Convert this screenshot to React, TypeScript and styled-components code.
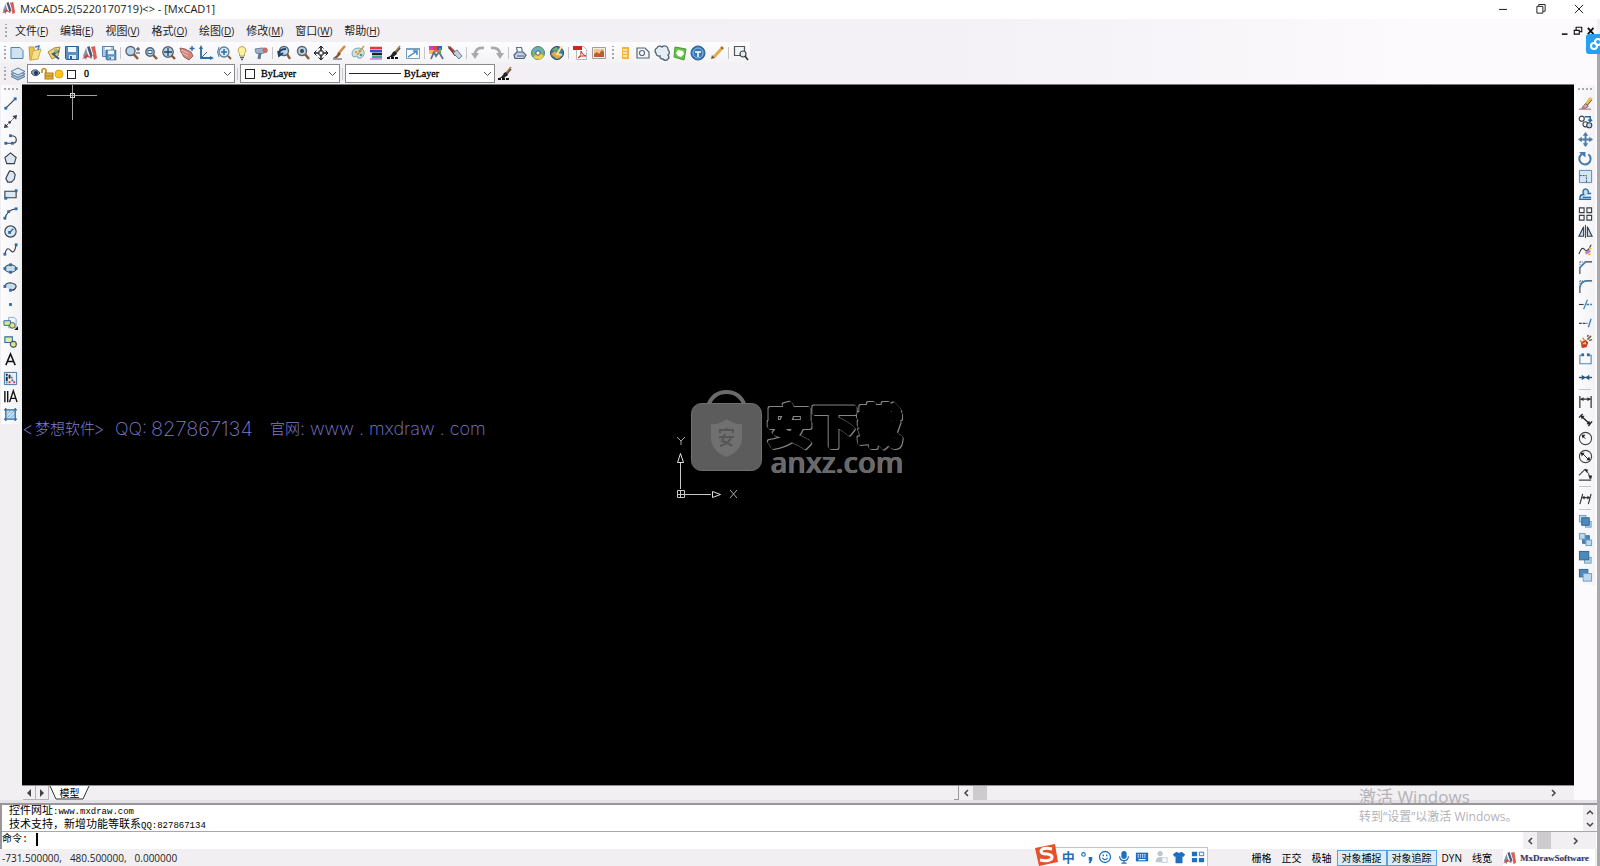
import React, { useState } from "react";
import styled, { createGlobalStyle } from "styled-components";

const UI = '"Open Sans", "Noto Sans CJK SC", sans-serif';
const SONG = '"Liberation Serif", "Noto Sans CJK SC", serif';
const MONO = '"Liberation Mono", "Noto Sans CJK SC", monospace';

const Global = createGlobalStyle`
  *, *::before, *::after { box-sizing: border-box; }
  body { margin: 0; background: #f1eff2; color: #222; font: 11px/16px ${UI}; }
  button { border: 0; padding: 0; margin: 0; background: none; color: inherit; font: inherit; }
  select, input { font: inherit; color: inherit; }
`;

const Window = styled.div`
  display: flex;
  flex-direction: column;
  min-height: 100vh;
  position: relative;
  overflow: hidden;
`;
const TitleBar = styled.header`
  display: flex;
  align-items: flex-start;
  height: 19px;
  padding: 1px 2px 0;
  background: #fff;
`;
const Title = styled.h1`
  flex: 1;
  margin: 0;
  padding-left: 4px;
  font-size: 11px;
  font-weight: 400;
  line-height: 16px;
`;
const WindowControl = styled.button`
  width: 38px;
  height: 15px;
  display: grid;
  place-items: center;
`;
const Body = styled.div`
  flex: 1;
  display: flex;
`;
const Frame = styled.main`
  flex: 1;
  min-width: 0;
  display: flex;
  flex-direction: column;
`;
const Edge = styled.div`
  width: 3px;
  margin-top: 32px;
  background: #a9a8aa;
`;
const Bars = styled.div`
  background: linear-gradient(90deg, #f1eff2 0%, #f3f1f5 60%, #fcfafd 90%);
`;
const MenuBar = styled.nav`
  display: flex;
  align-items: center;
  height: 23px;
  padding-left: 1px;
`;
const MenuItem = styled.button`
  padding: 0 6px;
  font-size: 11px;
  line-height: 20px;
  white-space: nowrap;
`;
const MenuKey = styled.span`
  font-size: 10px;
`;
const MdiControls = styled.div`
  display: flex;
  margin-left: auto;
`;
const MdiButton = styled.button`
  width: 13px;
  height: 18px;
  display: grid;
  place-items: center;
`;
const Toolbar = styled.div`
  display: flex;
  align-items: center;
  height: 21px;
`;
const ToolbarFace = styled.div<{ $vertical?: boolean }>`
  display: flex;
  align-items: center;
  flex-direction: ${(p) => (p.$vertical ? "column" : "row")};
  background: linear-gradient(${(p) => (p.$vertical ? "90deg" : "180deg")}, #fdfcfe, #f3f2f4);
  ${(p) => (p.$vertical ? "" : "height: 21px;")}
`;
const Grip = styled.span<{ $vertical?: boolean }>`
  flex: none;
  width: ${(p) => (p.$vertical ? 14 : 8)}px;
  height: ${(p) => (p.$vertical ? 9 : 13)}px;
  background: radial-gradient(circle, #aaa8ac 1px, transparent 1px) 3px 2px / 4px 4px
    ${(p) => (p.$vertical ? "repeat-x" : "repeat-y")};
`;
const Group = styled.div<{ $size: number; $vertical?: boolean }>`
  display: flex;
  flex-direction: ${(p) => (p.$vertical ? "column" : "row")};
  ${(p) => (p.$vertical ? "height" : "width")}: ${(p) => p.$size}px;
`;
const ToolButton = styled.button`
  flex: 1;
  min-width: 16px;
  min-height: 16px;
  display: grid;
  place-items: center;
`;
const Separator = styled.span<{ $vertical?: boolean }>`
  flex: none;
  width: ${(p) => (p.$vertical ? 12 : 1)}px;
  height: ${(p) => (p.$vertical ? 1 : 12)}px;
  margin: ${(p) => (p.$vertical ? "2px 0" : "0 2px")};
  background: #c6c4c8;
`;
const Combo = styled.label<{ $width: number }>`
  display: flex;
  align-items: center;
  width: ${(p) => p.$width}px;
  height: 19px;
  padding: 0 2px 0 3px;
  border: 1px solid #8a888c;
  background: #fff;
`;
const ComboSelect = styled.select<{ $indent: number }>`
  flex: 1;
  min-width: 0;
  height: 17px;
  border: 0;
  padding: 0 0 0 ${(p) => p.$indent}px;
  appearance: none;
  background: transparent;
  color: #000;
  font: 400 10px/16px ${SONG};
  -webkit-text-stroke: 0.3px #000;
`;
const Swatch = styled.span`
  width: 10px;
  height: 10px;
  margin: 0 1px;
  border: 1px solid #222;
  background: #fff;
`;
const LineSample = styled.span`
  width: 52px;
  height: 1px;
  background: #222;
`;
const Workspace = styled.div`
  flex: 1;
  display: flex;
`;
const SidePanel = styled.aside<{ $width: number; $right?: boolean }>`
  width: ${(p) => p.$width}px;
  padding-top: 1px;
  background: ${(p) => (p.$right ? "#fcfafd" : "#f1eff2")};
  ${ToolbarFace} { margin: 0 2px 0 1px; }
`;
const Drawing = styled.section`
  flex: 1;
  min-width: 0;
  display: flex;
  flex-direction: column;
  border-top: 1px solid #777;
`;
const Canvas = styled.div`
  position: relative;
  flex: 1;
  min-height: 480px;
  overflow: hidden;
  background: #000;
`;
const Crosshair = styled.svg`
  position: absolute;
  left: 25px;
  top: 0;
`;
const Banner = styled.p`
  position: absolute;
  left: 0;
  top: 332px;
  display: flex;
  margin: 0;
  color: #7d7dd0;
  font: 200 18px/24px Inter, "Noto Sans CJK SC", sans-serif;
  white-space: pre;
`;
const BannerPart = styled.span<{ $width: number; $size?: number }>`
  width: ${(p) => p.$width}px;
  font-size: ${(p) => p.$size ?? 18}px;
`;
const Ucs = styled.svg`
  position: absolute;
  left: calc(50% - 125px);
  top: 50%;
`;
const Brand = styled.div`
  position: absolute;
  left: calc(50% - 107px);
  top: calc(50% - 45px);
  display: flex;
  gap: 5px;
`;
const BrandText = styled.div`
  display: flex;
  flex-direction: column;
  padding-top: 12px;
`;
const BrandName = styled.svg`
  display: block;
  overflow: visible;
  filter: drop-shadow(1px 1px 0 #858585) drop-shadow(-1px -1px 0 #858585);
  text {
    fill: #000;
    stroke: #000;
    stroke-width: 4px;
    stroke-linejoin: round;
    font: 700 45px "Noto Sans CJK SC", sans-serif;
  }
`;
const BrandSite = styled.span`
  padding-left: 3px;
  color: #686868;
  font: 600 29px/24px "Open Sans", sans-serif;
  text-shadow: 1px 0 #7c7c7c;
`;
const TabStrip = styled.div`
  display: flex;
  align-items: stretch;
  height: 15px;
  padding-left: 1px;
  border-top: 1px solid #8f8d91;
  background: #f1eff2;
`;
const TabNav = styled.button`
  width: 13px;
  display: grid;
  place-items: center;
  border: solid #b5b3b7;
  border-width: 0 1px 1px 0;
`;
const ModelTab = styled.button`
  position: relative;
  width: 41px;
  display: grid;
  place-items: center;
  color: #000;
  font-size: 10px;
  line-height: 13px;
  svg { position: absolute; inset: 0; }
  span { position: relative; }
`;
const SplitBox = styled.span`
  width: 5px;
  margin-left: auto;
  border: solid #9a989c;
  border-width: 0 1px 1px 0;
`;
const HScroll = styled.div<{ $width: string }>`
  display: flex;
  align-items: stretch;
  width: ${(p) => p.$width};
  background: #f1eff2;
`;
const ScrollArrow = styled.button`
  flex: none;
  width: 14px;
  display: grid;
  place-items: center;
`;
const Thumb = styled.span`
  width: 14px;
  margin-right: auto;
  background: #cdcbce;
`;
const Splitter = styled.div`
  height: 5px;
  border-bottom: 2px solid #98969a;
  background: #e4e2e6;
`;
const CommandPane = styled.section`
  border-left: 2px solid #98969a;
  background: #fff;
  color: #000;
  font: 11px/14px ${MONO};
`;
const HistoryRow = styled.div`
  display: flex;
  height: 27px;
  border-bottom: 1px solid #a9a7ab;
`;
const History = styled.div`
  flex: 1;
  padding-left: 7px;
  overflow: hidden;
  p { margin: 0; line-height: 13px; }
`;
const Ascii = styled.span`
  font-size: 9px;
`;
const VScroll = styled.div`
  display: flex;
  flex-direction: column;
  width: 13px;
  margin-right: 1px;
  background: #f1eff2;
`;
const VArrow = styled.button`
  flex: 1;
  display: grid;
  place-items: center;
`;
const CommandRow = styled.div`
  display: flex;
  align-items: stretch;
  height: 17px;
  padding-right: 1px;
`;
const CommandLabel = styled.label`
  display: flex;
  flex: 1;
  font-size: 10px;
  line-height: 15px;
`;
const CommandInput = styled.input`
  flex: 1;
  height: 13px;
  margin: 1px 0 0 8px;
  padding: 0;
  border: 0;
  border-left: 2px solid #000;
  outline: 0;
  background: transparent;
`;
const Corner = styled.span`
  width: 13px;
  background: #f1eff2;
`;
const StatusBar = styled.footer`
  display: flex;
  align-items: stretch;
  height: 17px;
  padding: 0 2px;
  font-size: 10px;
  line-height: 18px;
`;
const Coordinates = styled.output`
  flex: 1;
  display: flex;
  gap: 8px;
`;
const ModeButton = styled.button<{ $on?: boolean }>`
  height: 16px;
  margin-top: 1px;
  padding: 0 4px;
  border: 1px solid ${(p) => (p.$on ? "#5aa2dc" : "transparent")};
  background: ${(p) => (p.$on ? "#dcebf8" : "transparent")};
  color: #000;
  line-height: 15px;
`;
const Vendor = styled.span`
  display: flex;
  align-items: center;
  gap: 3px;
  width: 92px;
  margin-left: 6px;
  background: #fff;
  color: #33334f;
  font: 700 9px/16px ${SONG};
  text-shadow: 1px 0 #8a8aff66;
`;
const Ime = styled.div`
  position: absolute;
  left: 65%;
  bottom: 0;
  display: flex;
  align-items: center;
  height: 19px;
  width: 168px;
  border: solid #c5c3c8;
  border-width: 1px 1px 0 0;
  background: #fff;
  svg { flex: none; }
`;
const ImeLogo = styled.button`
  width: 25px;
  height: 22px;
  margin: -4px 0 0 -6px;
`;
const ImeButton = styled.button`
  flex: 1;
  height: 18px;
  display: grid;
  place-items: center;
  color: #1f6fc0;
  font: 700 13px/16px "Noto Sans CJK SC", sans-serif;
`;
const Activation = styled.div`
  position: absolute;
  right: 76px;
  bottom: 40px;
  width: 165px;
  color: #b4b2b6;
  pointer-events: none;
  white-space: nowrap;
  p { margin: 0; font-size: 12px; line-height: 18px; }
  p:first-child { font-size: 17px; line-height: 22px; }
`;
const CloudTab = styled.button`
  position: absolute;
  right: 0;
  top: 34px;
  width: 14px;
  height: 20px;
  border-radius: 3px 0 0 3px;
  background: #26a0f2;
  overflow: hidden;
`;

const B = "#2b6ca6";
const D = "#3a3f48";
const L = "#c3dcee";
const Y = "#f2c14a";

const Glyph = ({ children, size = 16 }: { children: React.ReactNode; size?: number }) => (
  <svg width={size} height={size} viewBox="0 0 16 16" fill="none" aria-hidden="true">
    {children}
  </svg>
);

const Lens = ({ x = 6.5, y = 6, r = 4.5 }: { x?: number; y?: number; r?: number }) => (
  <>
    <path d={`M${x + r * 0.7} ${y + r * 0.7}L14 14`} stroke="#8a5a35" strokeWidth="2.4" />
    <circle cx={x} cy={y} r={r} fill="#b9d5ea" stroke="#59636e" strokeWidth="1.4" />
  </>
);
const Dots = ({ at }: { at: number[][] }) => (
  <>
    {at.map(([x, y]) => (
      <rect key={`${x}-${y}`} x={x - 1.5} y={y - 1.5} width="3" height="3" fill={B} />
    ))}
  </>
);
const Brush = () => (
  <>
    <path d="M14 1L9 7" stroke="#b77b3f" strokeWidth="1.600" />
    <path d="M14 3L9 9" stroke="#555" strokeWidth="1.600" />
    <path d="M9 6l2 3-4 3H2c2 0 4-3 5-5z" fill="#222" />
    <path d="M1 13h12" stroke="#111" strokeWidth="2" strokeDasharray="3 1" />
  </>
);
const MxMark = () => (
  <>
    <path d="M1 11L4 3l2 7-2 5z" fill="#8493ab" />
    <path d="M5 2l3-1 3 8-2 5z" fill="#4a5b7a" />
    <path d="M9 2l4-1 2 12-3 2z" fill="#dc5f55" />
    <path d="M0 14l5-5 5 5-4-2z" fill="#c9483f" />
    <path d="M8 1l3 9" stroke="#fff" />
  </>
);
const Disk = ({ small }: { small?: boolean }) => (
  <g transform={small ? "translate(4 4) scale(.75)" : undefined}>
    <path d="M1.5 1.5h13v13h-12l-1-1z" fill="#5b92c5" stroke="#2f5f91" />
    <path d="M4 2h8v5H4z" fill="#eef5fb" />
    <path d="M5 10h7v4H5z" fill="#dce8f2" />
    <path d="M6 11h2v3H6z" fill="#2f5f91" />
  </g>
);

type Tool = [string, React.ReactNode];

const fileTools: Tool[] = [
  ["新建", <path d="M2 2.500h9l3 3v8H2z" fill="#cfe2f2" stroke="#4f84b5" />],
  ["打开", <><path d="M2 2h5l1 12-5 1z" fill="#e9c352" stroke="#c79c35" /><path d="M6 6l8-2-3 10-7 1z" fill="#f8e08a" stroke="#d3ab45" /><path d="M8 2l4-1-1 4" stroke="#3f86c0" strokeWidth="1.500" /></>],
  ["打开图纸", <><path d="M2 7l6-4 6-1-2 9-6 3z" fill="#f0d27a" stroke="#a98632" /><path d="M13 6L7 9l6 5" stroke="#3d5a78" strokeWidth="2" /><circle cx="10" cy="6" r="2" fill="#8fb58a" /></>],
  ["保存", <Disk />],
  ["梦想CAD", <MxMark />],
  ["另存为", <><path d="M1.500 1.500h11v10h-11z" fill="#a9cae6" stroke="#4f84b5" /><path d="M4 2h6v3H4z" fill="#fff" /><Disk small /></>],
];
const zoomTools: Tool[] = [
  ["缩放", <><Lens /><path d="M12 4h4M14 2v4M12 8h4" stroke={D} /></>],
  ["窗口缩放", <><Lens x={7} y={7} r={4.2} /><rect x="5" y="5.500" width="4" height="3" fill="#fff" stroke={B} /></>],
  ["范围缩放", <><Lens x={7} y={7} r={5.2} /><path d="M3 7h8M7 3v8" stroke="#27435e" strokeWidth="1.300" /></>],
  ["平移", <><path d="M1 3l5 1 6 3 2 4-4 4-5-3-3-5z" fill="#d08a80" stroke="#a05a55" /><path d="M2 5l7 3M3 8l6 3" stroke="#eab9b2" /><path d="M13 1v5M10.500 3.500h5" stroke={B} strokeWidth="1.400" /></>],
  ["坐标系", <><path d="M3 3v10h11" stroke={B} strokeWidth="1.800" /><path d="M3 13l6-6" stroke={B} /><path d="M3 0l2 4H1zM16 13l-4-2v4z" fill={B} /></>],
  ["动态缩放", <><circle cx="8" cy="7" r="5" fill="#dcebf6" stroke="#5a7f9f" strokeWidth="1.300" /><path d="M8 4v6M5 7h6" stroke={B} strokeWidth="1.500" /><path d="M12 11l3 3" stroke="#8a5a35" strokeWidth="2" /><path d="M3 2Q0 7 3 12" stroke="#5a7f9f" /></>],
  ["灯泡", <><path d="M8 1.500a4 4 0 0 0-2.500 7V11h5V8.500A4 4 0 0 0 8 1.500z" fill="#fdf2a0" stroke="#bca248" /><path d="M6 12.500h4M7 14.500h2" stroke="#667" strokeWidth="1.400" /></>],
  ["查找", <><path d="M2 4l7-1 5 1v3l-7 2-4-1z" fill="#9db2c8" stroke="#6f87a0" /><path d="M7 8l-1 6" stroke="#5f7890" strokeWidth="3" /><circle cx="12" cy="5" r="2.500" fill="#cf6a60" /></>],
];
const formatTools: Tool[] = [
  ["上一视图", <><Lens x={8} y={6} r={4.5} /><path d="M3 11Q2 4 10 4M2 6l1 5 4-3" stroke="#1c3d63" strokeWidth="1.800" /></>],
  ["实时缩放", <><Lens x={7} y={6} r={4.5} /><circle cx="7" cy="6" r="2" fill="#444" /></>],
  ["实时平移", <><path d="M8 1v14M1 8h14" stroke="#222" strokeWidth="1.600" /><path d="M5.500 3.500L8 1l2.500 2.500M5.500 12.500L8 15l2.500-2.500M3.500 5.500L1 8l2.500 2.500M12.500 5.500L15 8l-2.500 2.500" stroke="#222" /><path d="M6 6h4v4H6z" fill="#fff" stroke="#222" /></>],
  ["画笔", <><path d="M14 1L7 9" stroke="#d08c45" strokeWidth="2.500" /><path d="M8 7l2 2-4 4H2l3-2z" fill="#7c5330" /><path d="M2 14h9" stroke="#444" /></>],
  ["调色板", <><path d="M2 9q0-6 7-6 6 1 5 6-1 5-6 4l-1-2-2 1q-3 0-3-3z" fill="#c9e3ea" stroke="#7fa6b5" /><circle cx="6" cy="7" r="1.300" fill="#e9a23b" /><circle cx="10" cy="6" r="1.300" fill="#d85a4f" /><circle cx="11" cy="10" r="1.300" fill="#52a058" /><path d="M14 1L7 10" stroke="#d3a23f" strokeWidth="1.600" /></>],
  ["线型颜色", <><path d="M2 3h12" stroke="#e33" strokeWidth="2.500" /><path d="M2 6h12" stroke="#3a4ae0" strokeWidth="2.500" /><path d="M4 9h10" stroke="#222" strokeWidth="2.500" /><path d="M4 12h10" stroke="#33b08a" strokeWidth="2.500" /><path d="M2 14h12" stroke="#c3e" /></>],
  ["特性刷", <Brush />],
  ["视口", <><path d="M1.500 3.500h13v10h-13z" fill="#f7fbfe" stroke="#7d9fbd" /><path d="M1 4h14" stroke="#7d9fbd" strokeWidth="2" /><path d="M3 12l9-6M8 6h4v4" stroke="#3f86c0" strokeWidth="1.500" /></>],
];
const styleTools: Tool[] = [
  ["图层颜色", <><path d="M1 1h4v4H1z" fill="#d33fc5" /><path d="M5 1h4v4H5z" fill="#e7453a" /><path d="M9 1h5v4H9z" fill="#4454d8" /><path d="M1 5h4v4H1z" fill="#f2c14a" /><path d="M3 14l3-7 2 4 3-4 4 7" stroke="#5c7094" strokeWidth="1.800" /><path d="M12 3v5" stroke="#53b04d" strokeWidth="2" /><path d="M6 6h5" stroke="#d96a5c" strokeWidth="2" /></>],
  ["清理", <><path d="M2 2l6 6" stroke="#a5443a" strokeWidth="3" /><path d="M6 8l4-3 5 6-3 3z" fill="#c4cede" stroke="#6f7f99" /><path d="M1 1l7 10" stroke="#6b3a30" /></>],
];
const undoTools: Tool[] = [
  ["放弃", <><path d="M14 3Q6 2 5 9" stroke="#aaa8ad" strokeWidth="2.600" /><path d="M1 8h8l-4 6z" fill="#aaa8ad" /></>],
  ["重做", <><path d="M2 3q8-1 9 6" stroke="#aaa8ad" strokeWidth="2.600" /><path d="M7 8h8l-4 6z" fill="#aaa8ad" /></>],
];
const renderTools: Tool[] = [
  ["打印", <><path d="M4.500 2.500h5l1 5h-5z" fill="#f5f8fc" stroke="#5f7292" strokeWidth="1.200" /><path d="M2 10l3-3h6l3 3-2 3.500H3z" fill="#c3cee0" stroke="#4f6285" strokeWidth="1.200" /><path d="M5 11h7" stroke="#4f6285" /></>],
  ["渲染", <><circle cx="8" cy="8" r="6.500" fill="#79b866" stroke="#4d7c9a" /><path d="M2 6q5-6 11 0l-4 2z" fill="#69a9da" /><path d="M3 13l5-6 6 4-4 4z" fill="#f0cf4e" /><circle cx="8" cy="8" r="2.200" fill="#fff" stroke="#456" /></>],
  ["材质", <><circle cx="8" cy="8" r="6.500" fill="#3e7fb0" stroke="#345" /><path d="M2 9l6 5 4-2-6-6z" fill="#e9a83d" /><path d="M3 5l4-3 3 4z" fill="#74b35f" /><path d="M13 1L8 9l5 1" stroke="#f6e58a" strokeWidth="2" /></>],
];
const exportTools: Tool[] = [
  ["导出PDF", <><path d="M4.500 1.500h7l3 3v10h-10z" fill="#fff" stroke="#b9b9bd" /><path d="M1 1h9v4H1z" fill="#d6231f" /><path d="M6 13q4-3 3-7 1 4 5 5-5-1-8 2z" stroke="#d6231f" /></>],
  ["导出图片", <><path d="M1.500 2.500h13v11h-13z" fill="#f4f0ec" stroke="#a39e9a" /><path d="M3 4h10v8H3z" fill="#f0c48a" /><path d="M3 12V9l3-2 2 2 3-4 2 2v5z" fill="#c05a35" /></>],
];
const extraTools: Tool[] = [
  ["列表", <><path d="M5 2h7v12H5z" fill="#f3b53f" /><path d="M6 5h4M6 8h4M6 11h4" stroke="#fff3cf" strokeWidth="1.400" /></>],
  ["区域", <><path d="M2 3h8l4 4v6H2z" fill="#f1f4f8" stroke="#59677a" strokeWidth="1.200" /><circle cx="7" cy="8" r="2.500" fill="#fff" stroke="#59677a" strokeWidth="1.200" /></>],
  ["云线", <path d="M3 3a3 3 0 0 1 5-1 3.500 3.500 0 0 1 6 3 3 3 0 0 1 0 5 3.200 3.200 0 0 1-5 4 2.500 2.500 0 0 1-3-3A3 3 0 0 1 2 8a3 3 0 0 1 1-5z" fill="#e6edf5" stroke="#4f6078" strokeWidth="1.300" />],
  ["标注区", <><path d="M3 2l11 2-2 11-10-3z" fill="#6cc04c" stroke="#4a9a32" /><path d="M6 5l5 1 1 3-3 3-3-1-2-3z" fill="#fff" /></>],
  ["文字圆", <><circle cx="8" cy="8" r="7" fill="#3978b5" stroke="#275a8c" /><circle cx="8" cy="8" r="5" stroke="#8cc0ea" /><path d="M5 7h6M8 7v5" stroke="#fff" strokeWidth="1.500" /></>],
  ["铅笔", <><path d="M14 2L5 12" stroke="#e3ab48" strokeWidth="3" /><path d="M2 14l1-4 3 3z" fill="#7a5632" /><path d="M12 2l2 2" stroke="#a9693f" strokeWidth="2" /></>],
];
const findTool: Tool[] = [
  ["快速选择", <><path d="M1.500 1.500h10v9h-10z" fill="#f0f3f7" stroke="#555" strokeWidth="1.200" /><circle cx="10" cy="9" r="3" fill="#e4eef7" stroke="#444" strokeWidth="1.200" /><path d="M12 11l3 4" stroke="#333" strokeWidth="1.600" /></>],
];
const topGroups: [number, Tool[]][] = [
  [110, fileTools], [147, zoomTools], [147, formatTools], [37, styleTools],
  [37, undoTools], [55, renderTools], [37, exportTools],
];

const stroke = { stroke: D, strokeWidth: 1.2 };
const drawTools: Tool[] = [
  ["直线", <><path d="M3 13L13 3" {...stroke} /><Dots at={[[3, 13], [13, 3]]} /></>],
  ["构造线", <><path d="M3 13L13 3" stroke={D} strokeDasharray="4 1" /><path d="M15 1l-1 5-4-4zM1 15l1-5 4 4z" fill={D} /><path d="M6 8l2 2" stroke={D} strokeWidth="2" /></>],
  ["多段线", <><path d="M2 12h9q4-1 3-5-1-3-5-3" {...stroke} /><Dots at={[[3, 12], [10, 12], [8, 4]]} /></>],
  ["多边形", <path d="M8 2l6 5-2 6.500H4L2 7z" fill="#dbe8f3" {...stroke} />],
  ["不规则多边形", <path d="M7 2l4 1 2 3-1 5-3 3H5L3 10l2-4z" fill="#dbe8f3" {...stroke} />],
  ["矩形", <><path d="M2 4.500h12v7H2z" fill="#dbe8f3" {...stroke} /><Dots at={[[3, 12], [14, 4]]} /></>],
  ["圆弧", <><path d="M2 14Q4 4 14 3" {...stroke} /><Dots at={[[2, 13], [6, 6], [14, 3]]} /></>],
  ["圆", <><circle cx="8" cy="8" r="6" fill="#dbe8f3" {...stroke} /><path d="M7 9l4-4" stroke={B} strokeWidth="1.600" /><Dots at={[[7, 9]]} /></>],
  ["样条曲线", <><path d="M2 13q2-9 6-4t6-6" {...stroke} /><Dots at={[[2, 13], [14, 3]]} /></>],
  ["椭圆", <><ellipse cx="8" cy="8" rx="6" ry="4" fill={L} {...stroke} /><Dots at={[[2, 8], [14, 8], [8, 4], [8, 12]]} /></>],
  ["椭圆弧", <><path d="M2 8q1-4 6-4 6 1 6 4-1 4-5 4" fill={L} {...stroke} /><Dots at={[[2, 8], [8, 12]]} /></>],
  ["点", <Dots at={[[8, 8]]} />],
  ["插入块", <><path d="M6 1.500h6l2 2v9H6z" fill="#eef5fb" stroke="#8aa9c4" /><path d="M1 5h7v5H1z" fill="#d9e78a" stroke={B} /><circle cx="10" cy="10" r="3" fill="#d9e78a" stroke="#456" /><path d="M12 15h4v-4z" fill="#111" /></>],
  ["创建块", <><path d="M2 3h8v6H2z" fill="#e3ecaa" stroke={B} strokeWidth="1.200" /><circle cx="11" cy="11" r="3.200" fill="#d9e78a" stroke="#456" strokeWidth="1.200" /></>],
  ["单行文字", <path d="M3 14L8 2l5 12M5 10h6" stroke="#111" strokeWidth="1.600" />],
  ["图案填充", <><path d="M1.500 1.500h13v13h-13z" fill="#e7f0f9" stroke="#3c72a6" /><path d="M3 3h2v2H3zM3 6h2v5H3zM6 4h2v4H6zM9 6h1v2H9z" fill="#222" /><path d="M6 11h2v2H6zM11 11h2v2h-2z" fill="#d33" /><path d="M9 9h2v2H9zM3 12h2v1H3z" fill="#36b" /></>],
  ["多行文字", <path d="M2 2v12M5 2v12M7 14l4-12 4 12M8 10h6" stroke="#111" strokeWidth="1.500" />],
  ["面域", <><path d="M3 3h10v10H3z" fill={L} /><path d="M3 1v14M13 1v14M1 3h14M1 13h14" stroke={B} strokeWidth="1.400" /><path d="M4 8l4-4M4 12l8-8M8 12l4-4" stroke="#5b8db8" strokeDasharray="1 1" /></>],
];
const modifyTools: Tool[] = [
  ["删除", <><path d="M14 2L9 9" stroke="#f0b84c" strokeWidth="3.500" /><path d="M15 4L9 11" stroke="#555" /><path d="M8 8l3 3-3 2H4z" fill="#e6a0a0" stroke="#666" /><path d="M1 14h13" stroke="#a55" /></>],
  ["复制", <><circle cx="4" cy="5" r="2.700" {...stroke} /><circle cx="8" cy="11" r="2.700" {...stroke} /><circle cx="12" cy="12" r="2.700" fill={L} {...stroke} /><path d="M7 3h6v5M11 6l2 2 2-2" stroke={B} strokeWidth="1.600" /></>],
  ["移动", <><path d="M8 2v12M2 8h12" stroke="#4a7dad" strokeWidth="2" /><path d="M8 0l3 4H5zM8 16l3-4H5zM0 8l4-3v6zM16 8l-4-3v6z" fill="#4a7dad" /></>],
  ["旋转", <><path d="M6 2.500a6 6 0 1 0 5 1" stroke="#4a7dad" strokeWidth="2.200" /><path d="M1 1h7v6z" fill="#4a7dad" /></>],
  ["缩放对象", <><path d="M1.500 1.500h13v13h-13z" fill="#d3e6f4" stroke="#5487b3" /><path d="M2 7h7v7" stroke="#34495e" strokeDasharray="2 1" /></>],
  ["偏移", <><path d="M1 13h13M2 12q0-4 4-4-2-5 2-6 4 1 3 5h3" fill={L} stroke={B} strokeWidth="1.500" /><path d="M5 11h9" stroke={B} strokeWidth="1.400" /></>],
  ["阵列", <path d="M1.500 2h5v5h-5zM9.500 2h5v5h-5zM1.500 10h5v5h-5zM9.500 10h5v5h-5z" {...stroke} />],
  ["镜像", <><path d="M6 3v10H1zM10 3v10h5z" fill={L} {...stroke} /><path d="M8 1v14" stroke={D} /></>],
  ["编辑曲线", <><path d="M1 13q3-9 6-5t7-5" {...stroke} /><path d="M8 12l5-3" stroke="#b87fcb" strokeWidth="3" /><circle cx="13" cy="7" r="1.500" fill={Y} /><circle cx="12" cy="13" r="1.500" fill={Y} /></>],
  ["倒角", <><path d="M2 15V8l6-6h7" {...stroke} /><path d="M2 8l6-6" stroke="#3f86c0" strokeWidth="1.800" /><path d="M2 2h4M2 2v4" stroke={D} strokeDasharray="1 1" /></>],
  ["圆角", <><path d="M2 15V9q1-7 8-7h5" {...stroke} /><path d="M2 9q1-7 8-7" stroke="#3f86c0" strokeWidth="1.800" /><path d="M2 2h3M2 2v3" stroke={D} strokeDasharray="1 1" /></>],
  ["修剪", <><path d="M1 8h5" stroke={D} strokeWidth="1.200" /><path d="M9 8h6" stroke="#3f86c0" strokeWidth="1.400" strokeDasharray="3 1" /><path d="M10 3L6 13" stroke="#3f86c0" strokeWidth="1.300" /></>],
  ["延伸", <><path d="M1 9h9" stroke={D} strokeWidth="1.300" strokeDasharray="3 1" /><path d="M14 4l-3 9" stroke="#3f86c0" strokeWidth="1.500" /></>],
  ["分解", <><path d="M3 9l5-3 3 3-2 5-5 1z" fill="#c33b2c" /><path d="M4 11l4-3 1 3z" fill={Y} /><path d="M10 6l4-4M10 3l1-2M12 7l3-1" stroke="#71604a" strokeWidth="1.600" /><path d="M5 4l2 3M2 7l3 2" stroke="#d9892f" strokeWidth="1.500" /></>],
  ["打断", <><path d="M6 3.500H2v9h12v-9h-4" stroke="#5487b3" strokeWidth="1.200" /><Dots at={[[5, 3], [11, 3]]} /></>],
  ["合并", <><path d="M1 8h14" stroke="#33536f" strokeWidth="1.500" /><path d="M4 5l4 3-4 3zM12 5L8 8l4 3z" fill="#24587f" /></>],
];
const dimTools: Tool[] = [
  ["线性标注", <><path d="M2 2v13M14 2v13M3 5.500h10" stroke="#333" strokeWidth="1.300" /><path d="M2 5.500l4-2v4zM14 5.500l-4-2v4z" fill="#333" /></>],
  ["对齐标注", <><path d="M3 4l10 9M1 6l4-4M11 15l4-5" stroke="#222" strokeWidth="1.500" /><path d="M3 4h4l-3 4zM13 13H9l3-4z" fill="#222" /></>],
  ["半径标注", <><circle cx="8" cy="8" r="6.500" fill="#f8f8f8" stroke="#444" strokeWidth="1.200" /><path d="M8 8L4 5" stroke="#222" /><path d="M4 4h4L5 8z" fill="#222" /></>],
  ["直径标注", <><circle cx="8" cy="8" r="6.500" fill="#f8f8f8" stroke="#444" strokeWidth="1.200" /><path d="M4 4l8 8" stroke="#222" /><path d="M3 4h4L4 8zM13 12H9l3-4z" fill="#222" /></>],
  ["角度标注", <><path d="M1 9L8 2M1 14h13" stroke="#444" strokeWidth="1.200" /><path d="M8 3q4 3 5 10" stroke="#222" /><path d="M7 2l4 1-2 3zM11 9h4l-1 4z" fill="#222" /></>],
];
const editDimTool: Tool[] = [
  ["编辑标注", <><path d="M5 3L2 14M14 3l-3 11M5 7h8" stroke="#333" strokeWidth="1.200" /><path d="M4 7l3-2v4zM13 7l-3-2v4z" fill="#333" /></>],
];
const dark = { fill: "#4f88bb", stroke: "#2f6594" };
const pale = { fill: "#bcd8ee", stroke: "#6f9cc2" };
const orderTools: Tool[] = [
  ["前置", <><rect x="1.500" y="1.500" width="7" height="7" {...pale} /><rect x="8" y="8" width="6" height="6" {...pale} /><rect x="4" y="4" width="8" height="8" {...dark} /></>],
  ["上移", <><rect x="5" y="4" width="7" height="8" {...dark} /><rect x="1.500" y="1.500" width="6" height="6" {...pale} /><rect x="8.500" y="8.500" width="6" height="6" {...pale} /></>],
  ["置于前面", <><rect x="7" y="8" width="7" height="6" {...pale} /><rect x="1.500" y="1.500" width="10" height="9" {...dark} /></>],
  ["置于后面", <><rect x="1.500" y="1.500" width="9" height="8" {...dark} /><rect x="5.500" y="6" width="9" height="8" {...pale} /></>],
];

const ToolGroup = ({ tools, size, vertical }: { tools: Tool[]; size: number; vertical?: boolean }) => (
  <Group $size={size} $vertical={vertical}>
    {tools.map(([label, art]) => (
      <ToolButton key={label} aria-label={label} title={label}>
        <Glyph size={vertical ? 15 : 16}>{art}</Glyph>
      </ToolButton>
    ))}
  </Group>
);

const Chevron = ({ dir }: { dir: "left" | "right" | "up" | "down" }) => {
  const d = { left: "M6 1L3 4l3 3", right: "M2 1l3 3-3 3", up: "M1 6l3-3 3 3", down: "M1 2l3 3 3-3" }[dir];
  return (
    <svg width="8" height="8" viewBox="0 0 8 8" fill="none" aria-hidden="true">
      <path d={d} stroke="#444" strokeWidth="1.500" />
    </svg>
  );
};
const ComboArrow = () => (
  <svg width="9" height="6" viewBox="0 0 9 6" fill="none" aria-hidden="true">
    <path d="M1 1l3.500 3.500L8 1" stroke="#555" />
  </svg>
);

const menus = [["文件", "F"], ["编辑", "E"], ["视图", "V"], ["格式", "O"], ["绘图", "D"], ["修改", "M"], ["窗口", "W"], ["帮助", "H"]];

const initialModes = [
  { name: "栅格", on: false }, { name: "正交", on: false }, { name: "极轴", on: false },
  { name: "对象捕捉", on: true }, { name: "对象追踪", on: true }, { name: "DYN", on: false }, { name: "线宽", on: false },
];

const ime: Tool[] = [
  ["标点", <><circle cx="4" cy="5" r="2" stroke="#1f6fc0" strokeWidth="1.300" /><path d="M10 8h4v3l-2 4h-2l1-3h-1z" fill="#1f6fc0" /></>],
  ["表情", <><circle cx="8" cy="8" r="6.300" stroke="#1f6fc0" strokeWidth="1.500" /><path d="M5 9q3 4 6 0" stroke="#1f6fc0" strokeWidth="1.300" /><path d="M6 5v2M10 5v2" stroke="#1f6fc0" strokeWidth="1.600" /></>],
  ["语音", <><rect x="5" y="1" width="6" height="9" rx="3" fill="#1f6fc0" /><path d="M3 7q0 5 5 5t5-5M8 12v3M5 15h6" stroke="#1f6fc0" strokeWidth="1.400" /></>],
  ["键盘", <><path d="M1 3h14v10H1z" fill="#1f6fc0" /><path d="M3 5.500h10M3 8h10" stroke="#fff" strokeDasharray="1.500 1" strokeWidth="1.400" /><path d="M4 11h8" stroke="#fff" strokeWidth="1.400" /></>],
  ["账号", <><circle cx="7" cy="4" r="3" fill="#bcc6d6" /><path d="M2 14q0-6 5-6t5 6z" fill="#bcc6d6" /><rect x="9" y="9" width="6" height="5" fill="#fff" stroke="#bcc6d6" /></>],
  ["皮肤", <path d="M5 2q3 2 6 0l4 3-2 3-1-1v8H4V7L3 8 1 5z" fill="#1f6fc0" />],
  ["工具箱", <><path d="M1 2h6v5H1zM1 9h6v5H1zM9 9h6v5H9z" fill="#1f6fc0" /><path d="M9.500 2.500h5v4h-5z" stroke="#1f6fc0" /></>],
];

export default function App() {
  const [modes, setModes] = useState(initialModes);
  const [command, setCommand] = useState("");
  const toggle = (name: string) =>
    setModes((all) => all.map((m) => (m.name === name ? { ...m, on: !m.on } : m)));

  return (
    <Window>
      <Global />
      <TitleBar>
        <Glyph size={14}><MxMark /></Glyph>
        <Title>MxCAD5.2(5220170719)&lt;&gt; - [MxCAD1]</Title>
        <WindowControl aria-label="最小化"><Glyph size={14}><path d="M3.500 8.500h9" stroke="#222" strokeWidth="1.200" /></Glyph></WindowControl>
        <WindowControl aria-label="还原"><Glyph size={12}><path d="M2.500 4.500h8v9h-8zM5 4V2h8.500v9H11" stroke="#222" strokeWidth="1.300" /></Glyph></WindowControl>
        <WindowControl aria-label="关闭"><Glyph size={12}><path d="M2.500 2.500l11 11M13.500 2.500l-11 11" stroke="#222" strokeWidth="1.300" /></Glyph></WindowControl>
      </TitleBar>
      <Body>
        <Frame>
          <Bars>
            <MenuBar>
              <Grip />
              {menus.map(([name, key]) => (
                <MenuItem key={key}>{name}<MenuKey>(<u>{key}</u>)</MenuKey></MenuItem>
              ))}
              <MdiControls>
                <MdiButton aria-label="最小化图纸"><Glyph size={10}><path d="M3 13h9" stroke="#111" strokeWidth="2.500" /></Glyph></MdiButton>
                <MdiButton aria-label="还原图纸"><Glyph size={10}><path d="M2 7h8v6H2zM5 6V2h9v7h-3" stroke="#111" strokeWidth="1.800" /></Glyph></MdiButton>
                <MdiButton aria-label="关闭图纸"><Glyph size={10}><path d="M3 3l9 10M12 3L3 13" stroke="#111" strokeWidth="3" /></Glyph></MdiButton>
              </MdiControls>
            </MenuBar>
            <Toolbar>
              <ToolbarFace>
                <Grip />
                {topGroups.map(([size, tools], i) => (
                  <React.Fragment key={i}>
                    {i > 0 && <Separator />}
                    <ToolGroup size={size} tools={tools} />
                  </React.Fragment>
                ))}
              </ToolbarFace>
              <ToolbarFace>
                <Grip />
                <ToolGroup size={110} tools={extraTools} />
                <Separator />
                <ToolGroup size={19} tools={findTool} />
              </ToolbarFace>
            </Toolbar>
            <Toolbar>
              <Grip />
              <ToolGroup size={19} tools={[["图层", <><path d="M8 7l7 3.500L8 14l-7-3.500z" fill="#a9bfd6" stroke="#5c7c9d" /><path d="M8 4.500L15 8l-7 3.500L1 8z" fill="#c6d8e8" stroke="#5c7c9d" /><path d="M8 2l7 3.500L8 9 1 5.500z" fill="#dfeaf4" stroke="#5c7c9d" /></>]]} />
              <Combo $width={208}>
                <svg width="48" height="14" viewBox="0 0 48 14" fill="none" aria-hidden="true">
                  <path d="M0 5q5-5 9 1-4 5-8 1z" fill="#8ba3bd" stroke="#3b5474" />
                  <circle cx="5" cy="6" r="2" fill="#1f3552" />
                  <path d="M11 6V3q2-3 4 0v5" stroke="#c08a1e" strokeWidth="1.600" />
                  <rect x="14" y="6" width="8" height="6" fill="#e8b23c" stroke="#b07c14" />
                  <path d="M14 9h8" stroke="#b07c14" />
                  <circle cx="28" cy="7" r="4" fill="#fcc61a" stroke="#e5a312" />
                  <rect x="36.500" y="3.500" width="8" height="8" fill="#fff" stroke="#222" />
                </svg>
                <ComboSelect $indent={5} aria-label="图层" defaultValue="0"><option>0</option></ComboSelect>
                <ComboArrow />
              </Combo>
              <Separator />
              <Combo $width={100}>
                <Swatch />
                <ComboSelect $indent={5} aria-label="颜色"><option>ByLayer</option></ComboSelect>
                <ComboArrow />
              </Combo>
              <Separator />
              <Combo $width={150}>
                <LineSample />
                <ComboSelect $indent={3} aria-label="线型"><option>ByLayer</option></ComboSelect>
                <ComboArrow />
              </Combo>
              <ToolGroup size={20} tools={[["笔刷", <Brush />]]} />
            </Toolbar>
          </Bars>
          <Workspace>
            <SidePanel $width={22} aria-label="绘图工具">
              <ToolbarFace $vertical>
                <Grip $vertical />
                <ToolGroup vertical size={330} tools={drawTools} />
              </ToolbarFace>
            </SidePanel>
            <Drawing>
              <Canvas>
                <Crosshair width="50" height="36" viewBox="0 0 50 36" fill="none" aria-hidden="true">
                  <path d="M0 10.500h50M25.500 0v35" stroke="#a0a0a0" />
                  <rect x="23.500" y="8.500" width="4" height="4" stroke="#d8d8d8" />
                </Crosshair>
                <Banner>
                  <BannerPart $width={13}>&lt;</BannerPart>
                  <BannerPart $width={58} $size={15}>梦想软件</BannerPart>
                  <BannerPart $width={22}>&gt;</BannerPart>
                  <BannerPart $width={36}>QQ:</BannerPart>
                  <BannerPart $width={119} $size={20}>827867134</BannerPart>
                  <BannerPart $width={30} $size={15}>官网</BannerPart>
                  <BannerPart $width={10}>:</BannerPart>
                  <BannerPart $width={180}>www . mxdraw . com</BannerPart>
                </Banner>
                <Ucs width="64" height="64" viewBox="0 0 64 64" fill="none" aria-hidden="true">
                  <path d="M7.500 28v26M8 59.500h30M4.500 55.500h7v7h-7zM4 59.500h8M7.500 55v8" stroke="#c8c8c8" />
                  <path d="M4.500 27.500h6l-3-9zM39.500 56.500v6l8-3z" stroke="#e0e0e0" />
                  <path d="M4 2l4 4 4-4M8 6v4M57 55l7 8M64 55l-7 8" stroke="#a8a8a8" />
                </Ucs>
                <Brand>
                  <svg width="71" height="82" viewBox="0 0 71 82" fill="none" aria-hidden="true">
                    <path d="M17 16Q22 2 35.500 2T54 16" stroke="#6a6a6a" strokeWidth="4" />
                    <rect x="0.500" y="13.500" width="70" height="67" rx="10" fill="#5c5c5c" stroke="#6f6f6f" />
                    <path d="M35.500 29q8 6 15.500 5v15q-1 12-15.500 18Q21 61 20 49V34q8 1 15.500-5z" fill="#707070" />
                    <path d="M29 43v-3h13v3M35.500 38v3M28 47h15M34 44l-3 7q7 2 10 5M40 47q-1 6-11 9" stroke="#555" strokeWidth="2" />
                  </svg>
                  <BrandText>
                    <BrandName width="138" height="48" viewBox="0 0 138 48">
                      <text x="0" y="41">安下载</text>
                    </BrandName>
                    <BrandSite>anxz.com</BrandSite>
                  </BrandText>
                </Brand>
              </Canvas>
              <TabStrip>
                <TabNav aria-label="上一个布局"><svg width="6" height="8" aria-hidden="true"><path d="M5 0v8L1 4z" fill="#444" /></svg></TabNav>
                <TabNav aria-label="下一个布局"><svg width="6" height="8" aria-hidden="true"><path d="M1 0v8l4-4z" fill="#444" /></svg></TabNav>
                <ModelTab>
                  <svg width="41" height="14" viewBox="0 0 41 14" aria-hidden="true">
                    <path d="M1 0l6 13h27l6-13z" fill="#fff" />
                    <path d="M1 0l6 13h27l6-13" fill="none" stroke="#333" />
                  </svg>
                  <span>模型</span>
                </ModelTab>
                <SplitBox />
                <HScroll $width="calc(40% - 5px)">
                  <ScrollArrow aria-label="向左滚动"><Chevron dir="left" /></ScrollArrow>
                  <Thumb />
                  <ScrollArrow aria-label="向右滚动"><Chevron dir="right" /></ScrollArrow>
                  <Corner />
                </HScroll>
              </TabStrip>
            </Drawing>
            <SidePanel $width={23} $right aria-label="修改工具">
              <ToolbarFace $vertical>
                <Grip $vertical />
                <ToolGroup vertical size={293} tools={modifyTools} />
                <Separator $vertical />
                <ToolGroup vertical size={92} tools={dimTools} />
                <Separator $vertical />
                <ToolGroup vertical size={18} tools={editDimTool} />
                <Separator $vertical />
                <ToolGroup vertical size={73} tools={orderTools} />
              </ToolbarFace>
            </SidePanel>
          </Workspace>
          <Splitter />
          <CommandPane>
            <HistoryRow>
              <History>
                <p>控件网址<Ascii>:www.mxdraw.com</Ascii></p>
                <p>技术支持，新增功能等联系<Ascii>QQ:827867134</Ascii></p>
              </History>
              <VScroll>
                <VArrow aria-label="向上滚动"><Chevron dir="up" /></VArrow>
                <VArrow aria-label="向下滚动"><Chevron dir="down" /></VArrow>
              </VScroll>
            </HistoryRow>
            <CommandRow>
              <CommandLabel>
                命令:
                <CommandInput value={command} onChange={(e) => setCommand(e.target.value)} />
              </CommandLabel>
              <HScroll $width="60px">
                <ScrollArrow aria-label="命令向左"><Chevron dir="left" /></ScrollArrow>
                <Thumb />
                <ScrollArrow aria-label="命令向右"><Chevron dir="right" /></ScrollArrow>
              </HScroll>
              <Corner />
            </CommandRow>
          </CommandPane>
          <StatusBar>
            <Coordinates>
              <span>-731.500000,</span>
              <span>480.500000,</span>
              <span>0.000000</span>
            </Coordinates>
            {modes.map((m) => (
              <ModeButton key={m.name} $on={m.on} aria-pressed={m.on} onClick={() => toggle(m.name)}>{m.name}</ModeButton>
            ))}
            <Vendor><Glyph size={14}><MxMark /></Glyph>MxDrawSoftware</Vendor>
          </StatusBar>
        </Frame>
        <Edge />
      </Body>
      <Ime>
        <ImeLogo aria-label="输入法">
          <svg width="25" height="22" viewBox="0 0 25 22" fill="none" aria-hidden="true">
            <path d="M1 4l20-4 3 18-19 4z" fill="#e8502a" />
            <path d="M18 5q-10-2-11 2 0 3 6 3 6 1 5 4-2 4-12 2" stroke="#fff" strokeWidth="3" />
          </svg>
        </ImeLogo>
        <ImeButton>中</ImeButton>
        {ime.map(([label, art]) => (
          <ImeButton key={label} aria-label={label}><Glyph size={14}>{art}</Glyph></ImeButton>
        ))}
      </Ime>
      <Activation>
        <p>激活 Windows</p>
        <p>转到“设置”以激活 Windows。</p>
      </Activation>
      <CloudTab aria-label="云同步">
        <svg width="14" height="20" viewBox="0 0 14 20" fill="none" aria-hidden="true">
          <circle cx="8" cy="12" r="3" stroke="#fff" strokeWidth="2" />
          <circle cx="12" cy="8" r="3" stroke="#fff" strokeWidth="2" />
        </svg>
      </CloudTab>
    </Window>
  );
}
